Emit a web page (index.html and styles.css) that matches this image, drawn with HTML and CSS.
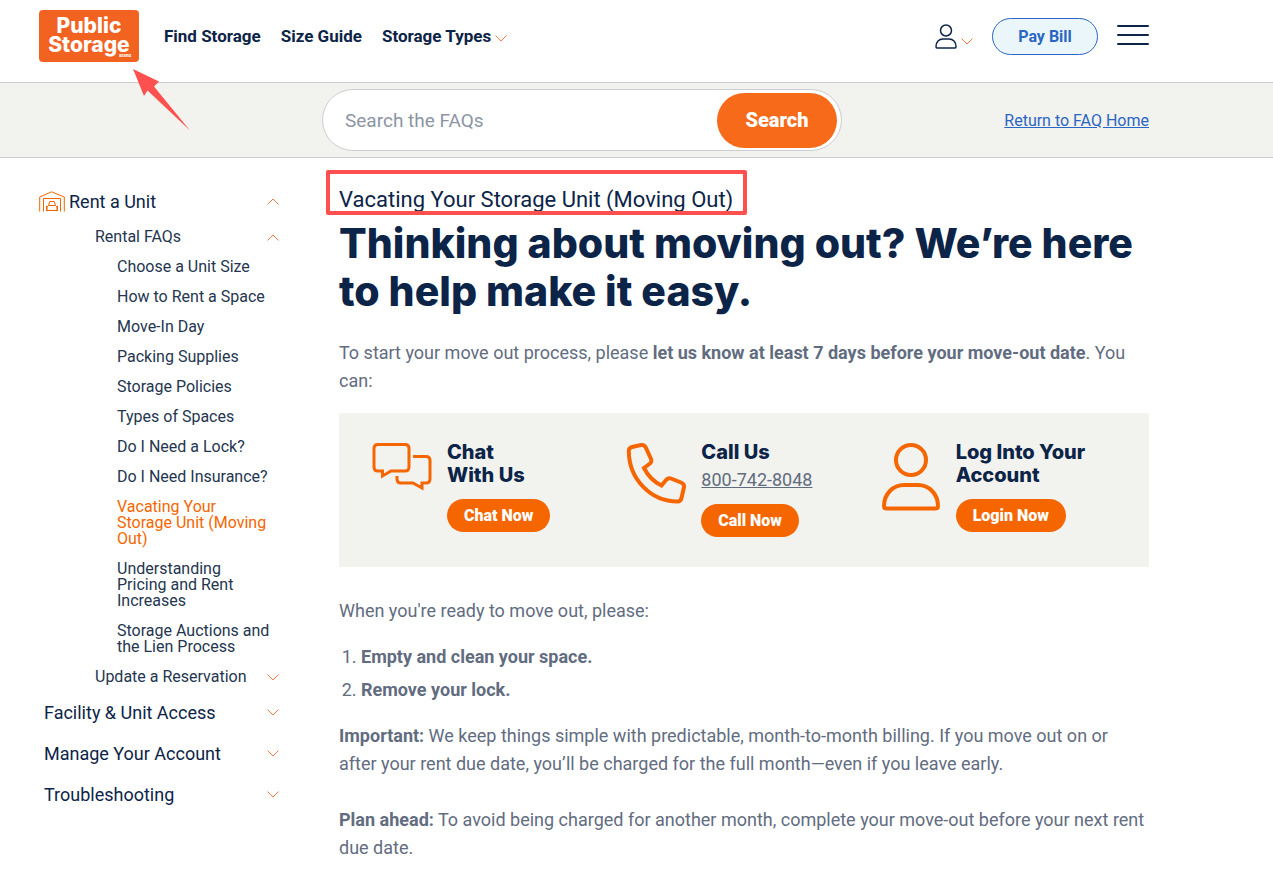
FILE: index.html
```html
<!DOCTYPE html>
<html lang="en">
<head>
    <meta charset="UTF-8">
    <meta name="viewport" content="width=device-width, initial-scale=1.0">
    <title>Vacating Your Storage Unit | Public Storage</title>
    <link rel="stylesheet" href="styles.css">
</head>
<body>

    <svg class="sprite" aria-hidden="true">
        <symbol id="chevron" viewBox="0 0 12 7"><path d="M.5 .5 6 6 11.5 .5"/></symbol>
        <symbol id="chevron-up" viewBox="0 0 12 7"><path d="M.5 6.5 6 1l5.500 5.500"/></symbol>
    </svg>

    <header class="header">
        <a href="#" class="logo"><span>Public</span><span>Storage</span><small>Brand</small></a>
        <nav class="main-nav">
            <a href="#">Find Storage</a>
            <a href="#">Size Guide</a>
            <a href="#">Storage Types <svg class="chevron"><use href="#chevron"/></svg></a>
        </nav>
        <div class="header-tools">
            <button type="button" class="account" aria-label="Account">
                <svg class="account-icon" viewBox="0 0 22 25"><circle cx="11" cy="6.500" r="5.500"/><path d="M1 22.500C1 18 4 15 8 15h6c4 0 7 3 7 7.500Q21 24 20 24H2Q1 24 1 22.500z"/></svg>
                <svg class="chevron"><use href="#chevron"/></svg>
            </button>
            <button type="button" class="pay-bill">Pay Bill</button>
            <button type="button" class="menu" aria-label="Menu"><span></span><span></span><span></span></button>
        </div>
        <svg class="arrow" viewBox="0 0 58 62"><path d="M0 0 26 12.500 21 17.500 57 61.500 14.500 21.500 11 27z"/></svg>
    </header>

    <div class="faq-bar">
        <form class="search">
            <input type="text" placeholder="Search the FAQs" aria-label="Search the FAQs">
            <button type="button">Search</button>
        </form>
        <a href="#" class="return">Return to FAQ Home</a>
    </div>

    <div class="page">
        <nav class="sidebar">
            <a href="#" class="topic topic-icon">
                <svg class="garage" viewBox="0 0 26 21"><path d="M.7 20.500V6L12.500.8 25.300 6v14.500M4.500 20.500V7.500h17v13M7.500 20v-5M18.500 20v-5M9.500 14.500l1.200-4h4.600l1.200 4M8 19.500v-3.500l1.500-1.500h7l1.500 1.500v3.500z"/></svg>
                Rent a Unit
                <svg class="chevron"><use href="#chevron-up"/></svg>
            </a>
            <a href="#" class="subtopic">Rental FAQs <svg class="chevron"><use href="#chevron-up"/></svg></a>
            <ul class="questions">
                <li><a href="#">Choose a Unit Size</a></li>
                <li><a href="#">How to Rent a Space</a></li>
                <li><a href="#">Move-In Day</a></li>
                <li><a href="#">Packing Supplies</a></li>
                <li><a href="#">Storage Policies</a></li>
                <li><a href="#">Types of Spaces</a></li>
                <li><a href="#">Do I Need a Lock?</a></li>
                <li><a href="#">Do I Need Insurance?</a></li>
                <li><a href="#" class="active">Vacating Your Storage Unit (Moving Out)</a></li>
                <li><a href="#">Understanding Pricing and Rent Increases</a></li>
                <li><a href="#">Storage Auctions and the Lien Process</a></li>
            </ul>
            <a href="#" class="subtopic">Update a Reservation <svg class="chevron"><use href="#chevron"/></svg></a>
            <div class="topics">
                <a href="#" class="topic">Facility &amp; Unit Access <svg class="chevron"><use href="#chevron"/></svg></a>
                <a href="#" class="topic">Manage Your Account <svg class="chevron"><use href="#chevron"/></svg></a>
                <a href="#" class="topic">Troubleshooting <svg class="chevron"><use href="#chevron"/></svg></a>
            </div>
        </nav>

        <main class="content">
            <h2 class="page-title">Vacating Your Storage Unit (Moving Out)</h2>
            <h1>Thinking about moving out? We’re here to help make it easy.</h1>
            <p class="intro">To start your move out process, please <strong>let us know at least 7 days before your move-out date</strong>. You can:</p>

            <div class="options">
                <div class="option">
                    <svg class="option-icon" viewBox="0 0 60 70"><path d="M6 1.500h27q4 0 4 4V24q0 4-4 4H19l-8.500 5V28H6q-4 0-4-4V5.500q0-4 4-4zM41 13.500h13q4 0 4 4V36q0 4-4 4h-4v5l-9-5H29q-4 0-4-4v-3"/></svg>
                    <div>
                        <h3>Chat<br>With Us</h3>
                        <button type="button" class="btn">Chat Now</button>
                    </div>
                </div>
                <div class="option">
                    <svg class="option-icon phone" viewBox="0 0 60 70"><path d="M6 4 15 2q3-.5 4.500 2L25 16q1 3-1 4.500L18 25q6 12 17.500 17.500l5-6q2-2 4.500-1l10 4q3.500 1.500 3 4.500L55.500 55q-.8 3.500-4 3.500C25 58.500 3 36.500 2.800 8q0-3 3.200-4z"/></svg>
                    <div>
                        <h3>Call Us</h3>
                        <a href="#" class="phone-number">800-742-8048</a>
                        <button type="button" class="btn">Call Now</button>
                    </div>
                </div>
                <div class="option">
                    <svg class="option-icon user" viewBox="0 0 60 70"><circle cx="30" cy="17" r="15"/><path d="M3 63C3 51 12 42 23 42h14c11 0 20 9 20 21q0 2.500-2.500 2.500h-49Q3 65.500 3 63z"/></svg>
                    <div>
                        <h3>Log Into Your<br>Account</h3>
                        <button type="button" class="btn">Login Now</button>
                    </div>
                </div>
            </div>

            <p>When you're ready to move out, please:</p>
            <ol>
                <li><strong>Empty and clean your space.</strong></li>
                <li><strong>Remove your lock.</strong></li>
            </ol>
            <p><strong>Important:</strong> We keep things simple with predictable, month-to-month billing. If you move out on or after your rent due date, you’ll be charged for the full month—even if you leave early.</p>
            <p><strong>Plan ahead:</strong> To avoid being charged for another month, complete your move-out before your next rent due date.</p>
        </main>
    </div>

</body>
</html>
```
FILE: styles.css
```css
* { box-sizing: border-box; }
body { margin: 0; font-family: Roboto, Arial, sans-serif; color: #0c2448; background-color: #fff; }
a { color: inherit; text-decoration: none; }
button { font-family: inherit; padding: 0; border: none; cursor: pointer; }
svg { fill: none; flex-shrink: 0; }
.sprite { display: none; }
.chevron { width: 12px; height: 7px; stroke: #f47b45; stroke-width: 1; }

/* header */
.header { position: relative; display: flex; align-items: flex-start; height: 83px; padding: 10px 124px 0 39px; border-bottom: 1px solid #ccc; }
.logo { position: relative; width: 100px; height: 52px; padding-top: 6px; border-radius: 4px; background-color: #f26322; color: #fff; font: 800 21px/19px Inter, sans-serif; text-align: center; }
.logo span { display: block; }
.logo small { position: absolute; right: 8px; bottom: 4px; font-size: 4px; line-height: 4px; }
.main-nav { display: flex; gap: 20px; padding: 14px 0 0 25px; font-size: 17px; line-height: 24px; font-weight: 700; }
.header-tools { display: flex; align-items: center; margin-left: auto; padding-top: 8px; }
.account { display: flex; align-items: center; gap: 4px; margin-right: 19px; background: none; }
.account .chevron { margin-top: 10px; }
.account-icon { width: 22px; height: 25px; stroke: #0c2448; stroke-width: 1.5; }
.pay-bill { width: 106px; height: 37px; border: 1px solid #2b66c2; border-radius: 19px; background-color: #ebf6fb; color: #2b66c2; font-size: 16px; font-weight: 700; }
.menu { display: flex; flex-direction: column; gap: 7px; width: 32px; margin: 0 0 4px 19px; background: none; }
.menu span { height: 2px; border-radius: 1px; background-color: #0c2448; }
.arrow { position: absolute; left: 133px; top: 69px; width: 58px; height: 62px; fill: #ff5050; z-index: 1; }

/* search bar */
.faq-bar { display: flex; align-items: center; justify-content: space-between; height: 75px; padding: 0 124px 0 322px; background-color: #f2f2ee; border-bottom: 1px solid #ccc; }
.search { display: flex; align-items: center; width: 520px; height: 62px; padding: 0 4px 0 22px; border: 1px solid #cccdd2; border-radius: 31px; background-color: #fff; }
.search input { flex: 1; min-width: 0; padding: 0; border: none; outline: none; background: none; font: 19px Roboto, Arial, sans-serif; }
.search input::placeholder { color: #8c95a3; }
.search button { width: 120px; height: 55px; border-radius: 28px; background-color: #f66a19; color: #fff; font-size: 20px; font-weight: 900; }
.return { color: #2b66c2; font-size: 16px; text-decoration: underline; }

/* sidebar */
.page { display: flex; gap: 60px; padding: 28px 124px 32px 39px; }
.sidebar { width: 240px; flex-shrink: 0; padding-top: 5px; }
.topic, .subtopic { display: flex; align-items: center; }
.topic { padding-left: 5px; font-size: 18px; line-height: 21px; }
.topic-icon { padding-left: 0; gap: 4px; }
.garage { width: 26px; height: 21px; stroke: #f56600; stroke-width: 1; }
.sidebar .chevron { margin-left: auto; }
.subtopic { padding-left: 56px; margin-top: 17px; font-size: 16px; line-height: 16px; color: #24364f; }
.questions { margin: 14px 0; padding: 0 9px 0 78px; list-style: none; font-size: 16px; line-height: 16px; color: #24364f; }
.questions li + li { margin-top: 14px; }
.questions .active { color: #f56600; }
.questions + .subtopic { margin-top: 0; }
.topics { display: grid; gap: 20px; margin-top: 17px; }

/* article */
.content { flex: 1; min-width: 0; }
.page-title { position: relative; width: fit-content; margin: 0; font-size: 22px; line-height: 28px; font-weight: 400; }
/* red frame around the title */
.page-title::after { content: ""; position: absolute; inset: -16px -14px -1px -13px; border: 4px solid #ff5050; border-radius: 2px; }
h1 { margin: 5px 0 24px; font: 800 41px/48px Inter, sans-serif; }
.content p { margin: 0 0 28px; font-size: 18px; line-height: 28px; color: #626c7f; }
.content .intro { margin-bottom: 18px; }
.options { display: grid; grid-template-columns: repeat(3, 1fr); margin-bottom: 30px; padding: 28px 14px 30px 33px; background-color: #f2f2ee; }
.option { display: flex; align-items: flex-start; gap: 15px; }
.option-icon { width: 60px; height: 70px; margin-top: 2px; stroke: #f56600; stroke-width: 3; }
.option-icon.phone, .option-icon.user { stroke-width: 4; }
h3 { margin: 0 0 12px; font: 800 20px/23px Inter, sans-serif; }
.phone-number { display: block; margin: -10px 0 10px; font-size: 18px; line-height: 28px; color: #626c7f; text-decoration: underline; }
.btn { height: 33px; padding: 0 17px; border-radius: 17px; background-color: #f56600; color: #fff; font-size: 16px; font-weight: 900; }
ol { margin: -10px 0 18px; padding-left: 22px; font-size: 18px; line-height: 28px; color: #626c7f; }
ol li + li { margin-top: 5px; }
```
